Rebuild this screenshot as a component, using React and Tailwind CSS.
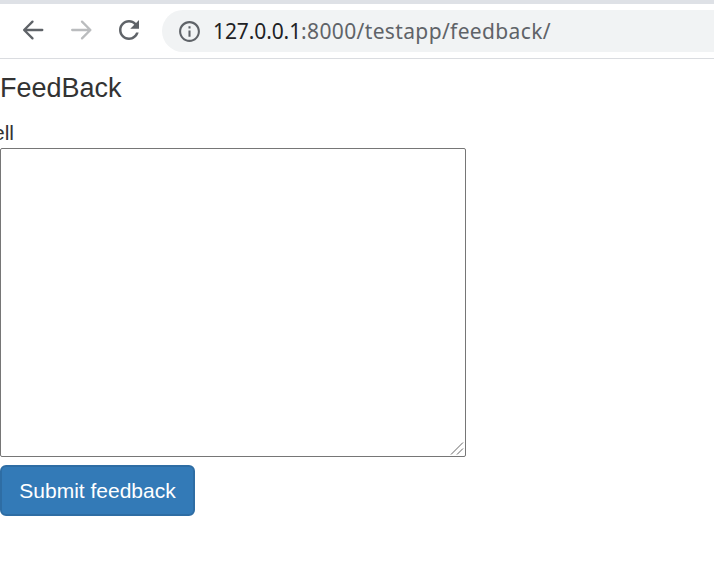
function BackIcon() {
  return (
    <svg className="size-6 shrink-0" viewBox="0 0 24 24" fill="none" stroke="#5f6368" strokeWidth="2.3" strokeLinecap="round" strokeLinejoin="round">
      <path d="M21.3 12H3.5M11.5 3.6L3.1 12l8.4 8.4" />
    </svg>
  );
}

function ForwardIcon() {
  return (
    <svg className="size-6 shrink-0" viewBox="0 0 24 24" fill="none" stroke="#babcbe" strokeWidth="2.3" strokeLinecap="round" strokeLinejoin="round">
      <path d="M3.2 12h18M13 3.6l8.4 8.4-8.4 8.4" />
    </svg>
  );
}

function ReloadIcon() {
  return (
    <svg className="size-[30px] shrink-0" viewBox="0 0 24 24" fill="#5f6368">
      <path d="M17.65 6.35C16.2 4.9 14.21 4 12 4c-4.42 0-7.99 3.58-7.99 8s3.57 8 7.99 8c3.73 0 6.84-2.55 7.73-6h-2.08c-.82 2.33-3.04 4-5.65 4-3.31 0-6-2.69-6-6s2.69-6 6-6c1.66 0 3.14.69 4.22 1.78L13 11h7V4l-2.35 2.35z" />
    </svg>
  );
}

function InfoIcon() {
  return (
    <svg className="size-[25px] shrink-0" viewBox="0 0 24 24" fill="#5f6368">
      <path d="M11 7h2v2h-2zm0 4h2v6h-2zm1-9C6.48 2 2 6.48 2 12s4.48 10 10 10 10-4.48 10-10S17.52 2 12 2zm0 18c-4.41 0-8-3.59-8-8s3.59-8 8-8 8 3.59 8 8-3.59 8-8 8z" />
    </svg>
  );
}

export default function App() {
  return (
    <div className="h-[583px] w-[714px] overflow-hidden bg-white font-['Liberation_Sans',Arial,sans-serif] text-[#333]">
      <header className="flex h-[59px] items-start border-t-4 border-b border-t-[#dee1e6] border-b-[#dadce0] pt-[6px]">
        <div className="flex h-10 w-[162px] shrink-0 items-center pl-[21px]">
          <BackIcon />
          <div className="ml-6">
            <ForwardIcon />
          </div>
          <div className="ml-[21px]">
            <ReloadIcon />
          </div>
        </div>
        <div className="flex h-[42px] flex-1 items-center rounded-l-full bg-[#f1f3f4] pl-[15px]">
          <InfoIcon />
          <div className="ml-[11px] font-['Noto_Sans',sans-serif] text-[21px] leading-[42px] whitespace-nowrap text-[#5f6368]">
            <span className="tracking-[-0.1px] text-[#202124]">127.0.0.1</span>
            <span className="tracking-[0.36px]">:8000/testapp/feedback/</span>
          </div>
        </div>
      </header>
      <main>
        <h4 className="mt-[14px] text-[27px] leading-[30px]">FeedBack</h4>
        <label className="mt-[15px] -ml-[7px] block h-[30px] text-[21px] leading-[30px] whitespace-nowrap">ell</label>
        <div className="relative h-[309px] w-[466px]">
          <textarea className="block size-full resize-none rounded-[2px] border border-[#767676] bg-white outline-none" />
          <svg className="pointer-events-none absolute right-[2px] bottom-[2px] h-[13px] w-[14px]" viewBox="0 0 14 13" fill="none" stroke="#666" strokeWidth="1">
            <path d="M1 12.5L13 .5M7 12.5l6-6" />
          </svg>
        </div>
        <button className="mt-2 block h-[51px] w-[195px] rounded-[6px] border-2 border-[#2e6da4] bg-[#337ab7] text-[21px] leading-[30px] whitespace-nowrap text-white">
          Submit feedback
        </button>
      </main>
    </div>
  );
}
